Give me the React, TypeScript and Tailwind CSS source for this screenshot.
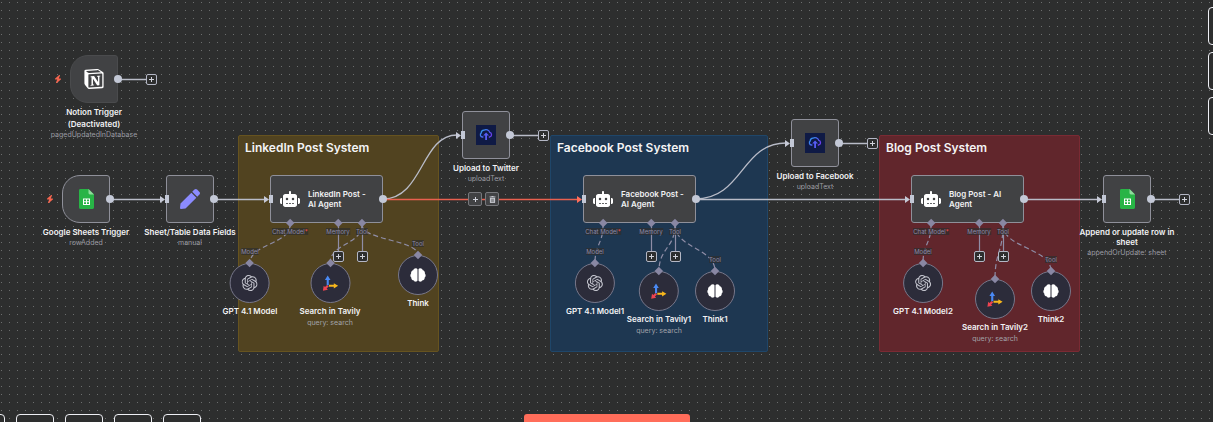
import React from 'react';
import { FaPen, FaTrashAlt } from 'react-icons/fa';
import { FaBolt, FaRobot } from 'react-icons/fa6';
import { SiNotion, SiOpenai } from 'react-icons/si';

type Point = { x: number; y: number };

const at = ({ x, y }: Point) => ({ left: x, top: y });

const stickies = [
  { title: 'LinkedIn Post System', x: 238, y: 135, width: 201, tone: 'bg-[#514320] border-[#66531f]' },
  { title: 'Facebook Post System', x: 550, y: 135, width: 218, tone: 'bg-[#1e3751] border-[#1f4669]' },
  { title: 'Blog Post System', x: 879, y: 135, width: 201, tone: 'bg-[#61262c] border-[#7a2a33]' },
];

const agents = [
  { title: 'LinkedIn Post - AI Agent', x: 270, y: 175, active: false },
  { title: 'Facebook Post - AI Agent', x: 583, y: 175, active: true },
  { title: 'Blog Post - AI Agent', x: 911, y: 175, active: false },
];

type Kind = 'model' | 'search' | 'think';

const tools: { kind: Kind; title: string; x: number; y: number; from: Point }[] = [
  { kind: 'model', title: 'GPT 4.1 Model', x: 250, y: 263, from: { x: 290, y: 225 } },
  { kind: 'search', title: 'Search in Tavily', x: 330, y: 263, from: { x: 362, y: 225 } },
  { kind: 'think', title: 'Think', x: 418, y: 255, from: { x: 362, y: 225 } },
  { kind: 'model', title: 'GPT 4.1 Model1', x: 595, y: 263, from: { x: 603, y: 225 } },
  { kind: 'search', title: 'Search in Tavily1', x: 659, y: 271, from: { x: 675, y: 225 } },
  { kind: 'think', title: 'Think1', x: 715, y: 271, from: { x: 675, y: 225 } },
  { kind: 'model', title: 'GPT 4.1 Model2', x: 923, y: 263, from: { x: 931, y: 225 } },
  { kind: 'search', title: 'Search in Tavily2', x: 995, y: 279, from: { x: 1003, y: 225 } },
  { kind: 'think', title: 'Think2', x: 1051, y: 271, from: { x: 1003, y: 225 } },
];

function SheetsIcon() {
  return (
    <svg viewBox="0 0 15 20" className="h-5 w-[15px]">
      <path d="M1.4 0H9.5L15 5.5V18.6A1.4 1.4 0 0 1 13.6 20H1.4A1.4 1.4 0 0 1 0 18.6V1.4A1.4 1.4 0 0 1 1.4 0Z" fill="#28b446" />
      <path d="M9.5 0 15 5.5H10.9A1.4 1.4 0 0 1 9.5 4.1Z" fill="#8fdc9c" />
      <path d="M4 9.5H11V16H4Z" fill="#fff" />
      <path d="M5 10.6H7V12.2H5ZM8 10.6H10V12.2H8ZM5 13.2H7V14.9H5ZM8 13.2H10V14.9H8Z" fill="#28b446" />
    </svg>
  );
}

function CloudUploadIcon() {
  return (
    <svg viewBox="0 0 20 20" className="size-5">
      <defs>
        <linearGradient id="cloud" x1="0" y1="0" x2="1" y2="0.6">
          <stop offset="0" stopColor="#2aa5e8" />
          <stop offset="0.6" stopColor="#4d62f5" />
          <stop offset="1" stopColor="#6a3ff0" />
        </linearGradient>
      </defs>
      <rect width="20" height="20" fill="#0f1a45" />
      <path d="M7.4 12H6.4A2.2 2.2 0 0 1 5.2 8.1 3 3 0 0 1 7.9 5.2 3.9 3.9 0 0 1 13.8 7.4 2.4 2.4 0 0 1 13.8 12H12.8" fill="none" stroke="url(#cloud)" strokeWidth="1.3" />
      <path d="M10.1 7.4 7.2 10.6H9.2V15H11V10.6H13Z" fill="#585cf6" />
    </svg>
  );
}

function TavilyIcon() {
  return (
    <svg viewBox="0 0 16 17" className="h-[17px] w-4">
      <path d="M5.2 0.6 8 5H6.3V10.2H4.2V5H2.4Z" fill="#4a8af4" />
      <path d="M15.6 10.8 11.3 13.4V11.8H6.5V9.8H11.3V8.2Z" fill="#f8b71c" />
      <path d="M0.4 15.8 1.2 10.8 2.5 12 4.6 10 6.2 11.6 4.1 13.6 5.4 14.8Z" fill="#ee4350" />
    </svg>
  );
}

function BrainIcon() {
  return (
    <svg viewBox="0 0 16 14" className="h-3.5 w-4" fill="#fff">
      <path d="M7.5 1.2V12.6C7 14 4.6 14.1 3.9 12.5 2.2 12.4 1.1 11.1 1.4 9.7 0.1 8.7 0 6.5 1.1 5.4 0.9 3.8 1.8 2.5 3.2 2.3 3.6 0 6.9-0.4 7.5 1.2Z" />
      <path d="M8.5 1.2V12.6C9 14 11.4 14.1 12.1 12.5 13.8 12.4 14.9 11.1 14.6 9.7 15.9 8.7 16 6.5 14.9 5.4 15.1 3.8 14.2 2.5 12.8 2.3 12.4 0 9.1-0.4 8.5 1.2Z" />
    </svg>
  );
}

function Plus() {
  return (
    <svg viewBox="0 0 7 7" className="size-[7px]" stroke="#d0d2da" strokeWidth="1">
      <path d="M3.5 1V6M1 3.5H6" />
    </svg>
  );
}

function AddButton({ x, y, label }: Point & { label: string }) {
  return (
    <button
      type="button"
      aria-label={label}
      style={at({ x, y })}
      className="absolute flex size-[11px] items-center justify-center rounded-xs border border-[#b4b7c5] bg-[#2d2e2e]"
    >
      <Plus />
    </button>
  );
}

function InputPort({ active = false }: { active?: boolean }) {
  return (
    <span className="absolute top-1/2 -left-[7px] flex -translate-y-1/2 items-center">
      <svg viewBox="0 0 5 7" className="h-[7px] w-[5px]" fill={active ? '#ff6d5a' : '#c6c9d6'}>
        <path d="M0 0 5 3.5 0 7Z" />
      </svg>
      <span className="h-2 w-1 bg-[#c3c8d6]" />
    </span>
  );
}

function OutputPort() {
  return <span className="absolute top-1/2 -right-[5px] size-2 -translate-y-1/2 rounded-full bg-[#c3c8d6]" />;
}

function Diamond() {
  return <span className="block size-1.5 rotate-45 bg-[#8987a3]" />;
}

type SquareProps = Point & {
  title: string;
  note?: string;
  subtitle: string;
  trigger?: boolean;
  muted?: boolean;
  wrap?: boolean;
  children: React.ReactNode;
};

function SquareNode({ x, y, title, note, subtitle, trigger, muted, wrap, children }: SquareProps) {
  return (
    <div style={at({ x, y })} className="absolute flex size-12 flex-col items-center">
      <div
        className={`relative flex size-12 shrink-0 items-center justify-center border bg-[#414244] ${
          trigger ? 'rounded-l-[18px] rounded-r-[3px]' : 'rounded-[3px]'
        } ${muted ? 'border-[#4a4b4d]' : 'border-[#8f909a]'}`}
      >
        {trigger && <FaBolt className="absolute -left-[17px] size-2 text-[#f5654f]" />}
        {children}
        {!trigger && <InputPort />}
        <OutputPort />
      </div>
      <div className={`mt-1 text-center text-[8px] leading-[10px] font-semibold text-[#f2f2f4] ${wrap ? 'w-[100px]' : 'whitespace-nowrap'}`}>
        {title}
        {note && <div className="mt-0.5">{note}</div>}
      </div>
      <div className="mt-px whitespace-nowrap text-[7px] leading-[10px] text-[#9b9ca3]">{subtitle}</div>
    </div>
  );
}

function AgentNode({ title, x, y, active }: Point & { title: string; active: boolean }) {
  return (
    <>
      <div style={at({ x, y })} className="absolute flex h-12 w-[113px] items-center gap-2 rounded-[3px] border border-[#8f909a] bg-[#414244] pl-[9px]">
        <FaRobot className="size-5 shrink-0 text-white" />
        <h3 className="w-16 text-[8px] leading-[10px] font-semibold text-[#f2f2f4]">{title}</h3>
        <InputPort active={active} />
        <OutputPort />
      </div>
      {[
        { name: 'Chat Model', offset: 20, required: true },
        { name: 'Memory', offset: 68, required: false },
        { name: 'Tool', offset: 92, required: false },
      ].map((slot) => (
        <div
          key={slot.name}
          style={at({ x: x + slot.offset, y: y + 45 })}
          className="absolute flex -translate-x-1/2 flex-col items-center gap-0.5 text-[6px] leading-[7px] text-[#8d8ba8]"
        >
          <Diamond />
          <span className="whitespace-nowrap bg-[#2d2e2e]/70">
            {slot.name}
            {slot.required && <span className="text-[#ff4d4d]">*</span>}
          </span>
        </div>
      ))}
      <AddButton x={x + 63} y={y + 76} label="Add memory" />
      <AddButton x={x + 87} y={y + 76} label="Add tool" />
    </>
  );
}

function ToolNode({ kind, title, x, y }: Point & { kind: Kind; title: string }) {
  return (
    <div style={at({ x, y })} className="absolute flex -translate-x-1/2 flex-col items-center">
      {kind !== 'search' && (
        <span className="absolute -top-[15px] bg-[#2d2e2e]/70 text-[6px] leading-[7px] text-[#8d8ba8]">
          {kind === 'model' ? 'Model' : 'Tool'}
        </span>
      )}
      <div className="relative flex size-10 items-center justify-center rounded-full border border-[#77778a] bg-[#2c2c3a]">
        <span className="absolute -top-1 left-1/2 -translate-x-1/2">
          <Diamond />
        </span>
        {kind === 'model' && <SiOpenai className="size-4 text-[#c4c5ce]" />}
        {kind === 'search' && <TavilyIcon />}
        {kind === 'think' && <BrainIcon />}
      </div>
      <div className="mt-[3px] whitespace-nowrap text-[8px] leading-[10px] font-semibold text-[#f2f2f4]">{title}</div>
      {kind === 'search' && <div className="mt-0.5 whitespace-nowrap text-[7px] leading-[10px] text-[#a2a3aa]">query: search</div>}
    </div>
  );
}

function Edges() {
  return (
    <svg className="pointer-events-none absolute inset-0 size-full" fill="none">
      <g stroke="#b9bcc8" strokeWidth="1.3">
        <path d="M118 79.5H146M510 135.5H538M839 143.5H867M1151 199.5H1179" />
        <path d="M110 199.5H160M214 199.5H264M695 199.5H905M1023 199.5H1097" />
        <path d="M383 199C423 199 421 135 457 135" />
        <path d="M695 199C743 199 741 143 786 143" />
      </g>
      <path d="M383 199.5H578" stroke="#e9604f" strokeWidth="1.5" />
      <g stroke="#8f8da6" strokeWidth="1.2">
        {agents.map(({ x }) => (
          <path key={x} d={`M${x + 68.5} 225V252M${x + 92.5} 225V252`} />
        ))}
        {tools.map(({ title, x, y, from }) => (
          <path
            key={title}
            strokeDasharray="5 3"
            d={`M${from.x} ${from.y}C${from.x} ${from.y + (y - from.y) * 0.5} ${x} ${y - (y - from.y) * 0.5} ${x} ${y}`}
          />
        ))}
      </g>
    </svg>
  );
}

const toolButton = 'size-[38px] shrink-0 rounded-[4px] border border-[#eeeff4] bg-[#2d2e2e]';

export default function App() {
  return (
    <main className="relative h-screen w-full overflow-hidden bg-[#2d2e2e] bg-[radial-gradient(circle_at_1.5px_2.5px,#6c6e6e_0.7px,transparent_1px)] bg-size-[8px_8px] font-['Inter',sans-serif]">
      {stickies.map(({ title, x, y, width, tone }) => (
        <section key={title} style={{ ...at({ x, y }), width }} className={`absolute h-[217px] rounded-xs border px-1.5 py-1 ${tone}`}>
          <h2 className="text-[12px] leading-4 font-semibold text-[#f4f4f5]">{title}</h2>
        </section>
      ))}

      <Edges />

      <SquareNode x={70} y={55} title="Notion Trigger" note="(Deactivated)" subtitle="pagedUpdatedInDatabase" trigger muted>
        <SiNotion className="size-5 text-white" />
      </SquareNode>
      <SquareNode x={62} y={175} title="Google Sheets Trigger" subtitle="rowAdded" trigger>
        <SheetsIcon />
      </SquareNode>
      <SquareNode x={166} y={175} title="Sheet/Table Data Fields" subtitle="manual">
        <FaPen className="size-5 text-[#8b8bff]" />
      </SquareNode>
      <SquareNode x={462} y={111} title="Upload to Twitter" subtitle="uploadText">
        <CloudUploadIcon />
      </SquareNode>
      <SquareNode x={791} y={119} title="Upload to Facebook" subtitle="uploadText">
        <CloudUploadIcon />
      </SquareNode>
      <SquareNode x={1103} y={175} title="Append or update row in sheet" subtitle="appendOrUpdate: sheet" wrap>
        <SheetsIcon />
      </SquareNode>

      {agents.map((agent) => (
        <AgentNode key={agent.title} {...agent} />
      ))}
      {tools.map(({ kind, title, x, y }) => (
        <ToolNode key={title} kind={kind} title={title} x={x} y={y} />
      ))}

      <AddButton x={146} y={74} label="Add node after Notion Trigger" />
      <AddButton x={538} y={130} label="Add node after Upload to Twitter" />
      <AddButton x={867} y={138} label="Add node after Upload to Facebook" />
      <AddButton x={1179} y={194} label="Add node after sheet update" />

      <div style={at({ x: 468, y: 192 })} className="absolute flex gap-[3px]">
        <button type="button" aria-label="Insert node" className="flex size-3.5 items-center justify-center rounded-xs border border-[#77787c] bg-[#414244]">
          <Plus />
        </button>
        <button type="button" aria-label="Delete connection" className="flex size-3.5 items-center justify-center rounded-xs border border-[#77787c] bg-[#414244]">
          <FaTrashAlt className="size-[7px] text-[#c6c8cf]" />
        </button>
      </div>

      <div className="absolute -bottom-[30px] -left-[33px] flex gap-[11px]">
        {['Fit view', 'Zoom in', 'Zoom out', 'Reset zoom', 'Tidy up'].map((label) => (
          <button key={label} type="button" aria-label={label} className={toolButton} />
        ))}
      </div>
      <div className="absolute top-[7px] -right-[33px] flex flex-col gap-[7px]">
        {['Add node', 'Search nodes', 'Add note'].map((label) => (
          <button key={label} type="button" aria-label={label} className={toolButton} />
        ))}
      </div>
      <button type="button" aria-label="Execute workflow" className="absolute -bottom-[30px] left-1/2 h-[38px] w-[166px] -translate-x-1/2 rounded-[3px] bg-[#ff6d5a]" />
    </main>
  );
}
